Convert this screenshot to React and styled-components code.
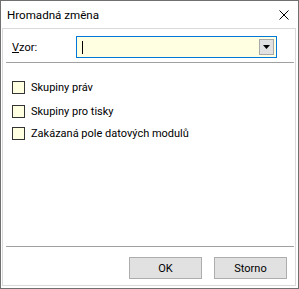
import React from "react";
import styled, { createGlobalStyle } from "styled-components";

const Global = createGlobalStyle`
  html, body { margin: 0; padding: 0; background: #ffffff; }
  body { font-family: Roboto, "Liberation Sans", Arial, sans-serif; font-size: 11px; color: #000; }
  * { box-sizing: border-box; }
`;

const Window = styled.div`
  width: 299px;
  height: 289px;
  border: 1px solid #707070;
  background: #ffffff;
  display: flex;
  flex-direction: column;
`;

const TitleBar = styled.div`
  height: 27px;
  display: flex;
  align-items: center;
  justify-content: space-between;
  padding: 0 9px 0 6px;
`;

const Title = styled.span`
  font-size: 11.6px;
  color: #000;
`;

const CloseIcon = styled.svg`
  width: 10px;
  height: 10px;
  display: block;
`;

const Client = styled.div`
  flex: 1;
  margin: 0 2px 2px 1px;
  border: 1px solid #dadada;
  background: #ffffff;
  display: flex;
  flex-direction: column;
`;

const FormRow = styled.div`
  margin-top: 7px;
  height: 22px;
  display: grid;
  grid-template-columns: 64px 201px;
  align-items: center;
  padding-left: 9px;
`;

const Label = styled.label`
  u { text-decoration: underline; }
`;

const ComboBox = styled.div`
  height: 22px;
  border: 1px solid #0078d7;
  background: #ffffe1;
  display: flex;
  align-items: center;
  justify-content: space-between;
  padding: 0 2px 0 5px;
`;

const Caret = styled.span`
  width: 1px;
  height: 13px;
  background: #000;
`;

const DropButton = styled.div`
  width: 15px;
  height: 16px;
  background: #e1e1e1;
  border: 1px solid #a8a8a8;
  display: flex;
  align-items: center;
  justify-content: center;
`;

const Separator = styled.div`
  height: 1px;
  background: #a0a0a0;
  margin: ${(p) => p.$top || 0}px 1px 0 3px;
`;

const CheckList = styled.div`
  margin-top: 13px;
  display: flex;
  flex-direction: column;
  padding-left: 9px;
`;

const CheckRow = styled.div`
  height: 22px;
  margin-bottom: ${(p) => p.$gap || 0}px;
  display: flex;
  align-items: center;
  gap: 6px;
`;

const Box = styled.span`
  width: 13px;
  height: 13px;
  border: 1px solid #333333;
  background: #ffffe1;
`;

const Footer = styled.div`
  margin-top: auto;
  display: flex;
  flex-direction: column;
`;

const ButtonRow = styled.div`
  margin: 10px 0 6px;
  display: flex;
  justify-content: flex-end;
  gap: 12px;
  padding-right: 8px;
`;

const Button = styled.button`
  width: 73px;
  height: 22px;
  background: #e1e1e1;
  border: 1px solid #adadad;
  font-family: Roboto, "Liberation Sans", Arial, sans-serif;
  font-size: 11px;
  color: #000;
  padding: 0;
`;

const items = [
  { t: "Skupiny práv", g: 2 },
  { t: "Skupiny pro tisky", g: 0 },
  { t: "Zakázaná pole datových modulů", g: 0 },
];

export default function App() {
  return (
    <>
      <Global />
      <Window>
        <TitleBar>
          <Title>Hromadná změna</Title>
          <CloseIcon viewBox="0 0 10 10">
            <path d="M0.5 0.5 L9.5 9.5 M9.5 0.5 L0.5 9.5" stroke="#000" strokeWidth="1" fill="none" />
          </CloseIcon>
        </TitleBar>
        <Client>
          <FormRow>
            <Label><u>V</u>zor:</Label>
            <ComboBox>
              <Caret />
              <DropButton>
                <svg width="7" height="4" viewBox="0 0 7 4">
                  <path d="M0 0 H7 L3.5 4 Z" fill="#000" />
                </svg>
              </DropButton>
            </ComboBox>
          </FormRow>
          <Separator $top={4} />
          <CheckList>
            {items.map((it) => (
              <CheckRow key={it.t} $gap={it.g}>
                <Box />
                <span>{it.t}</span>
              </CheckRow>
            ))}
          </CheckList>
          <Footer>
            <Separator />
            <ButtonRow>
              <Button>OK</Button>
              <Button>Storno</Button>
            </ButtonRow>
          </Footer>
        </Client>
      </Window>
    </>
  );
}
